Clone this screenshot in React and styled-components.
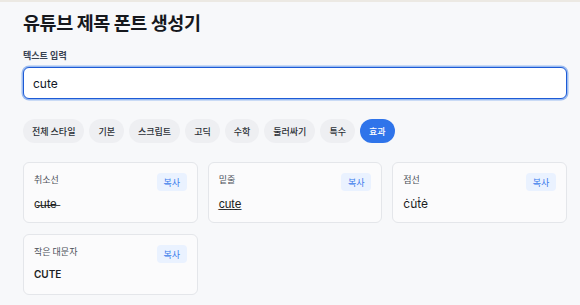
import React, { useState } from "react";
import styled, { createGlobalStyle } from "styled-components";

const GlobalStyle = createGlobalStyle`
  html, body {
    margin: 0;
    padding: 0;
    background: #f7f8fa;
  }
  body {
    font-family: Inter, "Noto Sans CJK KR", sans-serif;
    color: #111827;
  }
`;

const Page = styled.div`
  border-top: 2px solid #ece9e3;
  padding: 7px 13px 12px 23px;
`;

const Title = styled.h1`
  margin: 0;
  font-family: "Noto Sans CJK KR", sans-serif;
  font-size: 18.5px;
  font-weight: 700;
  line-height: 26px;
  color: #16181d;
  letter-spacing: -0.4px;
`;

const Label = styled.div`
  margin-top: 14px;
  font-size: 9px;
  font-weight: 600;
  color: #374151;
`;

const Input = styled.input`
  display: block;
  box-sizing: border-box;
  width: 100%;
  height: 32px;
  margin-top: 5px;
  padding: 0 9px;
  border: 1.5px solid #1d5bd6;
  border-radius: 6px;
  box-shadow: 0 0 0 1.5px #9cbcf0;
  background: #fff;
  font-family: Inter, "Noto Sans CJK KR", sans-serif;
  font-size: 12px;
  color: #111827;
  outline: none;
`;

const Chips = styled.div`
  display: flex;
  gap: 5px;
  margin-top: 20px;
`;

const Chip = styled.button`
  height: 24px;
  padding: 0 9px;
  border: none;
  border-radius: 12px;
  background: ${(p) => (p.$active ? "#2f74ea" : "#eeeff2")};
  color: ${(p) => (p.$active ? "#fff" : "#2b2f36")};
  font-family: "Noto Sans CJK KR", sans-serif;
  font-size: 9px;
  font-weight: 500;
`;

const Grid = styled.div`
  display: grid;
  grid-template-columns: repeat(3, 1fr);
  gap: 11px 10px;
  margin-top: 19px;
`;

const Card = styled.div`
  height: 61px;
  box-sizing: border-box;
  padding: 10px 10px 0 10px;
  background: #fbfbfc;
  border: 1px solid #e4e6ea;
  border-radius: 6px;
`;

const CardHead = styled.div`
  display: flex;
  justify-content: space-between;
  align-items: flex-start;
`;

const CardLabel = styled.div`
  font-family: "Noto Sans CJK KR", sans-serif;
  font-size: 9px;
  color: #4b5059;
`;

const CopyBtn = styled.button`
  width: 30px;
  height: 18px;
  border: none;
  border-radius: 4px;
  background: #eaf2ff;
  color: #3a7bec;
  font-family: "Noto Sans CJK KR", sans-serif;
  font-size: 9px;
  padding: 0;
`;

const Value = styled.div`
  margin-top: 5px;
  font-size: ${(p) => (p.$bold ? "10px" : "12px")};
  color: #1b1d22;
  font-family: Inter, "Noto Sans CJK KR", sans-serif;
  font-weight: ${(p) => (p.$bold ? 600 : 400)};
`;

const styles = ["전체 스타일", "기본", "스크립트", "고딕", "수학", "둘러싸기", "특수", "효과"];

const results = [
  { name: "취소선", text: "c\u0336u\u0336t\u0336e\u0336" },
  { name: "밑줄", text: "c\u0332u\u0332t\u0332e\u0332" },
  { name: "점선", text: "c\u0307u\u0307t\u0307e\u0307" },
  { name: "작은 대문자", text: "CUTE", bold: true },
];

export default function App() {
  const [text, setText] = useState("cute");
  return (
    <>
      <GlobalStyle />
      <Page>
        <Title>유튜브 제목 폰트 생성기</Title>
        <Label>텍스트 입력</Label>
        <Input value={text} onChange={(e) => setText(e.target.value)} />
        <Chips>
          {styles.map((s) => (
            <Chip key={s} $active={s === "효과"}>
              {s}
            </Chip>
          ))}
        </Chips>
        <Grid>
          {results.map((r) => (
            <Card key={r.name}>
              <CardHead>
                <CardLabel>{r.name}</CardLabel>
                <CopyBtn>복사</CopyBtn>
              </CardHead>
              <Value $bold={r.bold}>{r.text}</Value>
            </Card>
          ))}
        </Grid>
      </Page>
    </>
  );
}
